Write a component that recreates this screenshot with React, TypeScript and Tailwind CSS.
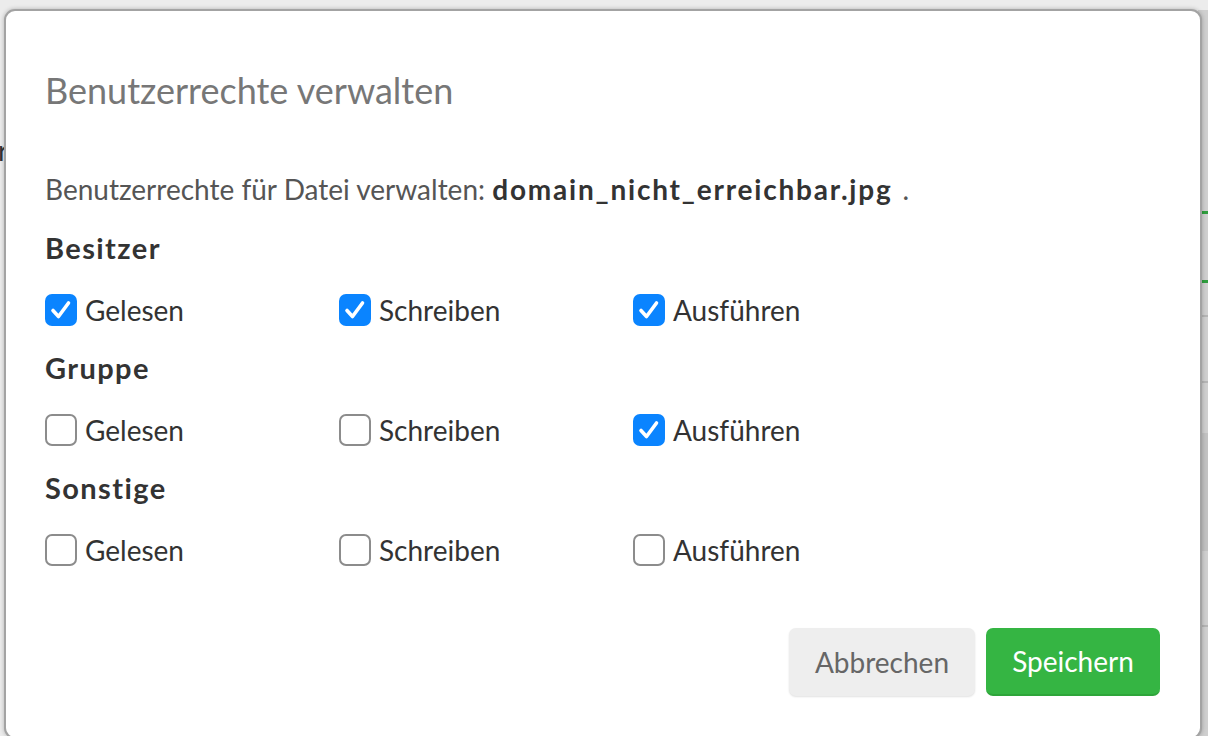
import React from "react";

type Perm = { label: string; checked: boolean };

const sections: { title: string; perms: Perm[] }[] = [
  {
    title: "Besitzer",
    perms: [
      { label: "Gelesen", checked: true },
      { label: "Schreiben", checked: true },
      { label: "Ausführen", checked: true },
    ],
  },
  {
    title: "Gruppe",
    perms: [
      { label: "Gelesen", checked: false },
      { label: "Schreiben", checked: false },
      { label: "Ausführen", checked: true },
    ],
  },
  {
    title: "Sonstige",
    perms: [
      { label: "Gelesen", checked: false },
      { label: "Schreiben", checked: false },
      { label: "Ausführen", checked: false },
    ],
  },
];

function Box({ checked }: { checked: boolean }) {
  if (checked) {
    return (
      <span className="flex h-[32px] w-[32px] shrink-0 items-center justify-center rounded-[7px] bg-[#0a84ff]">
        <svg width="26" height="26" viewBox="0 0 26 26" fill="none">
          <path
            d="M5 13.5 L10.5 19.5 L20.5 6"
            stroke="#ffffff"
            strokeWidth="3.6"
            strokeLinecap="round"
            strokeLinejoin="round"
          />
        </svg>
      </span>
    );
  }
  return (
    <span className="block h-[32px] w-[32px] shrink-0 rounded-[7px] border-2 border-[#8c8c8c] bg-white" />
  );
}

export default function App() {
  return (
    <div
      className="relative h-[736px] w-[1208px] overflow-hidden bg-[#ececec]"
      style={{ fontFamily: "Lato, 'Open Sans', sans-serif" }}
    >
      {/* dimmed page behind the modal */}
      <div className="absolute right-0 top-[10px] flex h-[726px] w-[10px] flex-col bg-[#cfcfcf]">
        <div className="mt-[201px] h-[3px] bg-[#2f9e3e]" />
        <div className="mt-[66px] h-[3px] bg-[#2f9e3e]" />
        <div className="mt-[32px] h-[2px] bg-[#b5b5b5]" />
        <div className="mt-[64px] h-[2px] bg-[#b5b5b5]" />
        <div className="mt-[50px] h-[118px] bg-[#c2c2c2]" />
        <div className="mt-[74px] h-[2px] bg-[#b5b5b5]" />
      </div>
      <div className="absolute left-[-2px] top-[136px] text-[28px] leading-none text-[#333]">r</div>

      {/* modal */}
      <div className="absolute left-[4px] top-[9px] flex h-[730px] w-[1198px] flex-col rounded-[11px] border-2 border-[#a3a3a3] bg-white pl-[39px] pr-[40px] shadow-[0_0_4px_rgba(0,0,0,0.25)]">
        <h2 className="mt-[59px] text-[36px] font-normal leading-[40px] text-[#777777]">
          Benutzerrechte verwalten
        </h2>

        <p className="mt-[61px] text-[28px] leading-[36px] text-[#555555]">
          Benutzerrechte für Datei verwalten:{" "}
          <b className="font-bold tracking-[1.8px] text-[#333333]">domain_nicht_erreichbar.jpg</b>
          <span className="ml-[10px]">.</span>
        </p>

        <div className="mt-[23px] flex flex-col gap-[22px]">
          {sections.map((s) => (
            <div key={s.title} className="flex flex-col gap-[26px]">
              <h3 className="text-[29px] font-bold leading-[36px] tracking-[1.4px] text-[#333333]">
                {s.title}
              </h3>
              <div className="flex">
                {s.perms.map((p) => (
                  <label key={p.label} className="flex w-[294px] items-center gap-[8px]">
                    <Box checked={p.checked} />
                    <span className="text-[28px] leading-[36px] text-[#333333]">{p.label}</span>
                  </label>
                ))}
              </div>
            </div>
          ))}
        </div>

        <div className="mt-[60px] flex justify-end gap-[11px]">
          <button className="h-[68px] w-[186px] rounded-[7px] bg-[#eeeeee] text-[28px] text-[#666666] shadow-[0_1px_2px_rgba(0,0,0,0.12)]">
            Abbrechen
          </button>
          <button className="h-[68px] w-[174px] rounded-[7px] border-b-2 border-[#2ea53a] bg-[#35b543] text-[28px] text-white">
            Speichern
          </button>
        </div>
      </div>
    </div>
  );
}
